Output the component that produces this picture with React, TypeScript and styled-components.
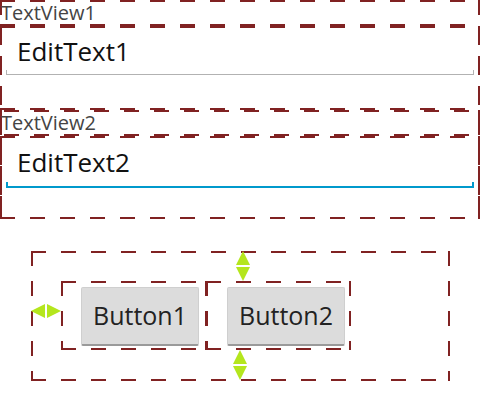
import React from "react";
import styled, { createGlobalStyle } from "styled-components";

const Global = createGlobalStyle`
  html, body { margin: 0; padding: 0; background: #ffffff; }
  body { font-family: "Open Sans", Roboto, sans-serif; }
`;

const LINE = "#802222";

const dashes = (dir: string, phase: number) =>
  `repeating-linear-gradient(${dir}, transparent 0 ${phase}px, ${LINE} ${phase}px ${phase + 15}px, transparent ${phase + 15}px 30px)`;

const Bounds = styled.div<{ $hp?: number; $vp?: number }>`
  position: relative;
  box-sizing: border-box;
  background-image: ${(p) => dashes("90deg", p.$hp ?? 0)}, ${(p) => dashes("90deg", p.$hp ?? 0)},
    ${(p) => dashes("180deg", p.$vp ?? 0)}, ${(p) => dashes("180deg", p.$vp ?? 0)};
  background-size: 100% 2px, 100% 2px, 2px 100%, 2px 100%;
  background-position: 0 0, 0 100%, 0 0, 100% 0;
  background-repeat: no-repeat;
`;

const Screen = styled.div`
  width: 480px;
  height: 411px;
  overflow: hidden;
  display: flex;
  flex-direction: column;
`;

const FormLayout = styled(Bounds)`
  width: 480px;
  height: 219px;
  display: flex;
  flex-direction: column;
`;

const TextViewBox = styled(Bounds)`
  height: 26px;
  flex: none;
  padding: 0 0 0 1px;
  font-size: 20px;
  line-height: 26px;
  color: #444444;
`;

const EditTextBox = styled(Bounds)`
  flex: 1;
  padding: 0 6px 0 6px;
  display: flex;
  flex-direction: column;
`;

const EditValue = styled.div<{ $top: number }>`
  padding: ${(p) => p.$top}px 0 0 11px;
  font-size: 26px;
  line-height: 32px;
  color: #111111;
  height: 32px;
`;

const Underline = styled.div<{ $focused?: boolean }>`
  margin-top: ${(p) => (p.$focused ? 4 : 3)}px;
  height: ${(p) => (p.$focused ? 6 : 5)}px;
  width: 468px;
  box-sizing: border-box;
  border: ${(p) => (p.$focused ? "2px solid #0099cc" : "1px solid #b2b2b2")};
  border-top: none;
`;

const ButtonLayout = styled(Bounds)`
  margin: 32px 0 0 31px;
  width: 419px;
  height: 130px;
  display: flex;
  align-items: flex-start;
  padding-left: 30px;
`;

const ButtonBounds = styled(Bounds)<{ $w: number; $pl: number; $ml?: number }>`
  margin-top: 30px;
  margin-left: ${(p) => p.$ml ?? 0}px;
  width: ${(p) => p.$w}px;
  height: 69px;
  padding: 6px 0 0 ${(p) => p.$pl}px;
`;

const Btn = styled.div`
  box-sizing: border-box;
  width: 118px;
  height: 59px;
  background: #dcdcdc;
  border: 1px solid #cfcfcf;
  border-bottom: 2px solid #9a9a9a;
  border-radius: 2px;
  display: flex;
  align-items: center;
  justify-content: center;
  font-size: 25px;
  color: #222222;
  padding-bottom: 3px;
`;

const Marker = styled.svg<{ $x: number; $y: number }>`
  position: absolute;
  left: ${(p) => p.$x}px;
  top: ${(p) => p.$y}px;
`;

const GREEN = "#b4e61d";

const HArrow = ({ x, y }: { x: number; y: number }) => (
  <Marker $x={x} $y={y} width="30" height="14" viewBox="0 0 30 14">
    <polygon points="0,7 14,0 14,14" fill={GREEN} />
    <polygon points="16,0 30,7 16,14" fill={GREEN} />
  </Marker>
);

const VArrow = ({ x, y }: { x: number; y: number }) => (
  <Marker $x={x} $y={y} width="14" height="30" viewBox="0 0 14 30">
    <polygon points="7,0 14,14 0,14" fill={GREEN} />
    <polygon points="0,16 14,16 7,30" fill={GREEN} />
  </Marker>
);

export default function App() {
  return (
    <>
      <Global />
      <Screen>
        <FormLayout>
          <TextViewBox $hp={0}>TextView1</TextViewBox>
          <EditTextBox $hp={0}>
            <EditValue $top={9}>EditText1</EditValue>
            <Underline />
          </EditTextBox>
          <TextViewBox $hp={4}>TextView2</TextViewBox>
          <EditTextBox $hp={0}>
            <EditValue $top={10}>EditText2</EditValue>
            <Underline $focused />
          </EditTextBox>
        </FormLayout>
        <ButtonLayout>
          <ButtonBounds $w={146} $pl={20}>
            <Btn>Button1</Btn>
          </ButtonBounds>
          <ButtonBounds $w={145} $pl={21} $ml={-1}>
            <Btn>Button2</Btn>
          </ButtonBounds>
          <HArrow x={0} y={53} />
          <VArrow x={205} y={0} />
          <VArrow x={202} y={99} />
        </ButtonLayout>
      </Screen>
    </>
  );
}
